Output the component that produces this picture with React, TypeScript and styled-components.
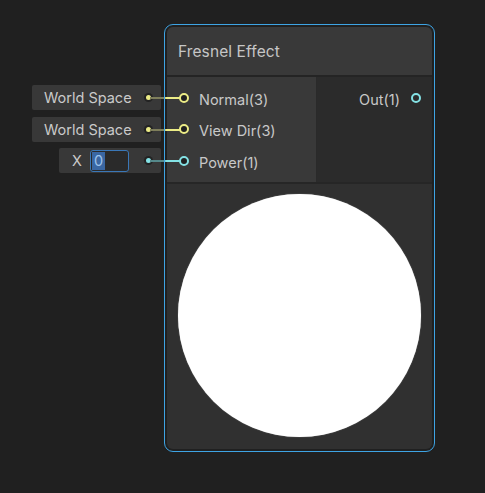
import React from 'react';
import styled, { createGlobalStyle } from 'styled-components';

const GlobalStyle = createGlobalStyle`
  html, body {
    margin: 0;
    padding: 0;
    background: #202020;
  }
  body {
    font-family: Inter, 'Noto Sans', sans-serif;
  }
`;

const YELLOW = '#ECEC86';
const YELLOW_DIM = '#7E7E5B';
const CYAN = '#84E2E5';
const CYAN_DIM = '#55898B';

type PortKind = 'vector' | 'float';

const colorOf = (kind: PortKind) => (kind === 'vector' ? YELLOW : CYAN);
const dimOf = (kind: PortKind) => (kind === 'vector' ? YELLOW_DIM : CYAN_DIM);

interface InputPort {
  label: string;
  kind: PortKind;
  field: 'space' | 'number';
}

const inputs: InputPort[] = [
  { label: 'Normal(3)', kind: 'vector', field: 'space' },
  { label: 'View Dir(3)', kind: 'vector', field: 'space' },
  { label: 'Power(1)', kind: 'float', field: 'number' },
];

const App: React.FC = () => {
  return (
    <Canvas>
      <GlobalStyle />
      <Node>
        <NodeBody>
          <Header>Fresnel Effect</Header>
          <Ports>
            <Inputs>
              {inputs.map((port) => (
                <PortRow key={port.label}>
                  <InlineField $wide={port.field === 'space'}>
                    {port.field === 'space' ? (
                      <FieldText>World Space</FieldText>
                    ) : (
                      <>
                        <FieldLabel>X</FieldLabel>
                        <NumberBox>
                          <Selected>0</Selected>
                        </NumberBox>
                      </>
                    )}
                    <FieldDot $color={colorOf(port.kind)} />
                  </InlineField>
                  <Edge $from={dimOf(port.kind)} $to={colorOf(port.kind)} />
                  <PortCircle $color={colorOf(port.kind)} $filled />
                  <PortLabel>{port.label}</PortLabel>
                </PortRow>
              ))}
            </Inputs>
            <Outputs>
              <OutRow>
                <PortLabel>Out(1)</PortLabel>
                <PortCircle $color={CYAN} />
              </OutRow>
            </Outputs>
          </Ports>
          <Preview>
            <PreviewDisc />
          </Preview>
        </NodeBody>
      </Node>
    </Canvas>
  );
};

const Canvas = styled.div`
  position: relative;
  width: 485px;
  height: 493px;
  background: #202020;
  overflow: hidden;
`;

const Node = styled.div`
  position: absolute;
  left: 164px;
  top: 24px;
  width: 271px;
  height: 428px;
  box-sizing: border-box;
  padding: 3px;

  &::after {
    content: '';
    position: absolute;
    inset: 0;
    border: 1px solid #3EA4E4;
    border-radius: 9px;
    pointer-events: none;
    z-index: 5;
  }
`;

const NodeBody = styled.div`
  height: 100%;
  display: flex;
  flex-direction: column;
  background: #242424;
  border-radius: 6px;
`;

const Header = styled.div`
  height: 48px;
  flex: none;
  display: flex;
  align-items: center;
  padding-left: 11px;
  background: #393939;
  border-radius: 6px 6px 0 0;
  border-bottom: 2px solid #242424;
  color: #C6C6C6;
  font-size: 15.5px;
  letter-spacing: 0.1px;
`;

const Ports = styled.div`
  display: flex;
  height: 105px;
  flex: none;
  border-bottom: 2px solid #262626;
`;

const Inputs = styled.div`
  width: 150px;
  background: #393939;
  padding-top: 5px;
  box-sizing: border-box;
  border-right: 1px solid #2a2a2a;
`;

const Outputs = styled.div`
  flex: 1;
  background: #2B2B2B;
  padding-top: 5px;
`;

const PortRow = styled.div`
  position: relative;
  height: 31.5px;
  display: flex;
  align-items: center;
  gap: 10px;
  padding-left: 12px;
`;

const OutRow = styled(PortRow)`
  justify-content: flex-end;
  padding-left: 0;
  padding-right: 11px;
  gap: 11px;
`;

const PortCircle = styled.span<{ $color: string; $filled?: boolean }>`
  position: relative;
  z-index: 2;
  width: 10px;
  height: 10px;
  flex: none;
  box-sizing: border-box;
  border-radius: 50%;
  border: 2px solid ${({ $color }) => $color};
  background: ${({ $filled }) => ($filled ? '#202020' : 'transparent')};
`;

const PortLabel = styled.span`
  color: #C8C8C8;
  font-size: 14.5px;
  padding-top: 3px;
`;

const Edge = styled.span<{ $from: string; $to: string }>`
  position: absolute;
  left: -17px;
  top: 15px;
  width: 31px;
  height: 2px;
  z-index: 1;
  background: linear-gradient(
    to right,
    ${({ $from }) => $from} 0%,
    ${({ $from }) => $from} 44%,
    ${({ $to }) => $to} 52%,
    ${({ $to }) => $to} 100%
  );
`;

const InlineField = styled.div<{ $wide: boolean }>`
  position: absolute;
  right: calc(100% + 6px);
  top: 3px;
  width: ${({ $wide }) => ($wide ? '129px' : '102px')};
  height: 25px;
  box-sizing: border-box;
  display: flex;
  align-items: center;
  padding: 0 10px 0 ${({ $wide }) => ($wide ? '12px' : '13px')};
  background: #383838;
  border-radius: 2px;
`;

const FieldText = styled.span`
  color: #CACACA;
  font-size: 14.5px;
`;

const FieldLabel = styled.span`
  color: #CACACA;
  font-size: 14.5px;
  width: 18px;
`;

const NumberBox = styled.div`
  width: 39px;
  height: 22px;
  box-sizing: border-box;
  border: 1px solid #3A77B7;
  border-radius: 3px;
  background: #2A2A2A;
  display: flex;
  align-items: center;
  padding-left: 1px;
`;

const Selected = styled.span`
  display: inline-block;
  height: 18px;
  line-height: 18px;
  padding: 0 2px 0 2px;
  background: #3A67A3;
  color: #9EC3EC;
  font-size: 14.5px;
`;

const FieldDot = styled.span<{ $color: string }>`
  margin-left: auto;
  width: 5px;
  height: 5px;
  border-radius: 50%;
  background: ${({ $color }) => $color};
  box-shadow: 0 0 0 2px #232323;
`;

const Preview = styled.div`
  flex: 1;
  background: #303030;
  border-radius: 0 0 6px 6px;
  padding: 10px 0 0 11px;
`;

const PreviewDisc = styled.div`
  width: 243px;
  height: 243px;
  border-radius: 50%;
  background: #FFFFFF;
  box-shadow: 0 0 1px rgba(255, 255, 255, 0.6);
`;

export default App;
